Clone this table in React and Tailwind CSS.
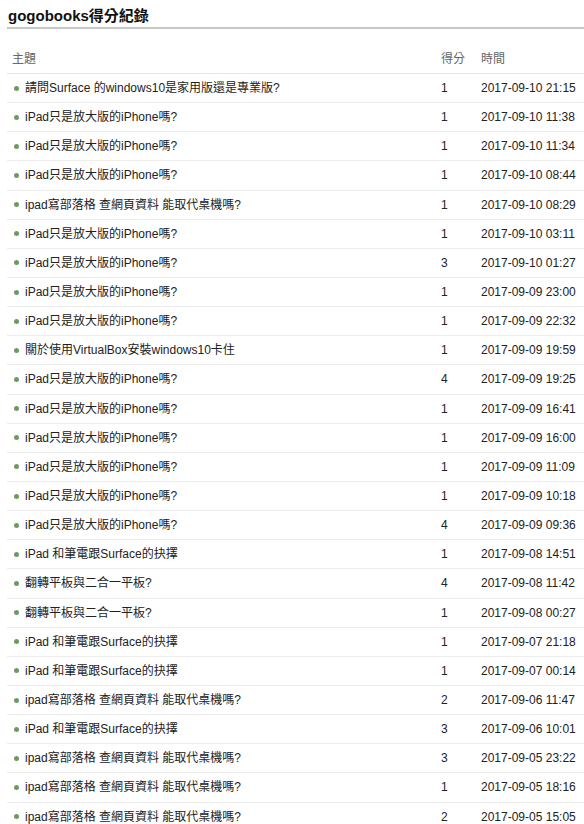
import React from 'react';

const rows = [
    ['請問Surface 的windows10是家用版還是專業版?', 1, '2017-09-10 21:15'],
    ['iPad只是放大版的iPhone嗎?', 1, '2017-09-10 11:38'],
    ['iPad只是放大版的iPhone嗎?', 1, '2017-09-10 11:34'],
    ['iPad只是放大版的iPhone嗎?', 1, '2017-09-10 08:44'],
    ['ipad寫部落格 查網頁資料 能取代桌機嗎?', 1, '2017-09-10 08:29'],
    ['iPad只是放大版的iPhone嗎?', 1, '2017-09-10 03:11'],
    ['iPad只是放大版的iPhone嗎?', 3, '2017-09-10 01:27'],
    ['iPad只是放大版的iPhone嗎?', 1, '2017-09-09 23:00'],
    ['iPad只是放大版的iPhone嗎?', 1, '2017-09-09 22:32'],
    ['關於使用VirtualBox安裝windows10卡住', 1, '2017-09-09 19:59'],
    ['iPad只是放大版的iPhone嗎?', 4, '2017-09-09 19:25'],
    ['iPad只是放大版的iPhone嗎?', 1, '2017-09-09 16:41'],
    ['iPad只是放大版的iPhone嗎?', 1, '2017-09-09 16:00'],
    ['iPad只是放大版的iPhone嗎?', 1, '2017-09-09 11:09'],
    ['iPad只是放大版的iPhone嗎?', 1, '2017-09-09 10:18'],
    ['iPad只是放大版的iPhone嗎?', 4, '2017-09-09 09:36'],
    ['iPad 和筆電跟Surface的抉擇', 1, '2017-09-08 14:51'],
    ['翻轉平板與二合一平板?', 4, '2017-09-08 11:42'],
    ['翻轉平板與二合一平板?', 1, '2017-09-08 00:27'],
    ['iPad 和筆電跟Surface的抉擇', 1, '2017-09-07 21:18'],
    ['iPad 和筆電跟Surface的抉擇', 1, '2017-09-07 00:14'],
    ['ipad寫部落格 查網頁資料 能取代桌機嗎?', 2, '2017-09-06 11:47'],
    ['iPad 和筆電跟Surface的抉擇', 3, '2017-09-06 10:01'],
    ['ipad寫部落格 查網頁資料 能取代桌機嗎?', 3, '2017-09-05 23:22'],
    ['ipad寫部落格 查網頁資料 能取代桌機嗎?', 1, '2017-09-05 18:16'],
    ['ipad寫部落格 查網頁資料 能取代桌機嗎?', 2, '2017-09-05 15:05'],
];

const App = () => {
    return (
        <div
            className="min-h-screen bg-white pl-[7px] text-[12px] text-[#222]"
            style={{ fontFamily: '"Liberation Sans", Arial, "Noto Sans CJK TC", sans-serif' }}
        >
            <h1 className="h-[29px] pl-[1px] pt-[7px] text-[15px] font-bold leading-[18px] text-[#111] border-b-2 border-[#c8c8c8]">
                gogobooks得分紀錄
            </h1>
            <div className="mt-[15px]">
                <div className="flex h-[30px] items-center border-b border-[#e4e4e4] text-[#666]">
                    <div className="w-[434px] pl-[5px]">主題</div>
                    <div className="w-[40px]">得分</div>
                    <div>時間</div>
                </div>
                {rows.map(([title, score, time], i) => (
                    <div key={i} className="flex h-[29.15px] items-center border-b border-[#ececec]">
                        <div className="flex w-[434px] items-center pl-[7px]">
                            <span className="mr-[6px] h-[5px] w-[5px] rounded-full bg-[#6e9a62]"></span>
                            <span>{title}</span>
                        </div>
                        <div className="w-[40px]">{score}</div>
                        <div className="whitespace-nowrap">{time}</div>
                    </div>
                ))}
            </div>
        </div>
    );
};

export default App;
